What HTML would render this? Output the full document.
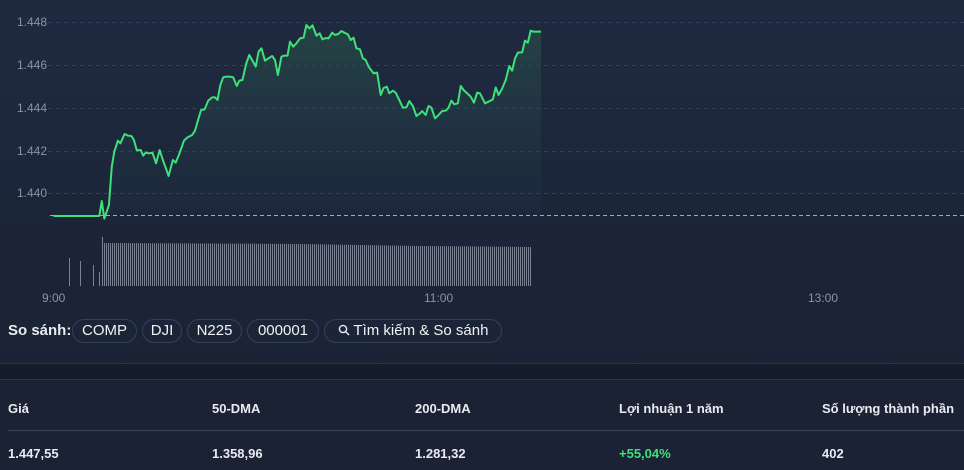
<!DOCTYPE html>
<html><head><meta charset="utf-8"><style>
*{margin:0;padding:0;box-sizing:border-box}
body{width:964px;height:470px;overflow:hidden;background:linear-gradient(#1f2a41 0%,#1b2436 60%,#1a2233 100%);font-family:"Liberation Sans",sans-serif;color:#e8ebf0;position:relative}
.ab{position:absolute}
.yl{position:absolute;left:17px;font-size:12px;color:#8b93a3}
.xl{position:absolute;top:291px;font-size:12px;color:#8b93a3}
.pill{position:absolute;top:319px;height:24px;border:1px solid #364056;border-radius:12px;font-size:15px;line-height:22px;text-align:center;color:#f0f2f5;background:#1c2537}
.h{position:absolute;top:401px;font-size:13px;font-weight:bold;color:#e8ebf0}
.v{position:absolute;top:446px;font-size:13px;font-weight:bold;color:#e8ebf0}
</style></head><body>
<svg class="ab" style="left:0;top:0" width="964" height="310">
<defs><linearGradient id="g" x1="0" y1="0" x2="0" y2="1"><stop offset="0" stop-color="#2a5a4a" stop-opacity=".55"/><stop offset="1" stop-color="#22344a" stop-opacity=".15"/></linearGradient>
<pattern id="vb" x="104" y="0" width="2" height="10" patternUnits="userSpaceOnUse"><rect x="0" y="0" width="1" height="10" fill="#7a8292"/></pattern></defs>
<g stroke="#34405a" stroke-dasharray="4 4" stroke-width="1">
<line x1="48" y1="22.5" x2="964" y2="22.5"/><line x1="48" y1="65.5" x2="964" y2="65.5"/><line x1="48" y1="108.5" x2="964" y2="108.5"/><line x1="48" y1="151.5" x2="964" y2="151.5"/><line x1="48" y1="193.5" x2="964" y2="193.5"/>
</g>
<line x1="50" y1="215.5" x2="964" y2="215.5" stroke="#a4abb8" stroke-dasharray="4 3"/>
<g transform="scale(0.35714,0.33333)">
<polygon fill="url(#g)" points="150,648 278,648 285,603 292,656 305,615 313,500 320,455 330,422 337,430 349,402 358,407 368,408 375,420 383,451 394,450 401,467 408,458 418,460 427,458 437,490 447,450 456,480 463,500 472,528 484,480 492,488 502,462 515,422 525,412 538,405 546,392 556,355 563,330 573,328 583,302 594,292 602,292 609,300 617,255 625,232 633,230 645,230 653,232 663,258 670,242 679,240 689,192 698,165 707,182 716,200 724,155 732,145 742,182 750,176 762,168 770,180 778,225 788,170 795,167 805,167 812,125 821,140 830,130 840,115 850,113 858,75 866,85 875,76 886,107 895,100 903,118 912,114 920,115 930,98 938,105 947,102 956,93 964,98 974,103 982,120 990,113 998,145 1008,148 1016,175 1024,180 1032,200 1046,220 1056,218 1066,285 1074,264 1083,260 1090,280 1100,272 1108,278 1118,300 1128,323 1138,322 1146,303 1156,318 1166,348 1176,340 1182,333 1192,345 1200,318 1208,323 1218,355 1228,345 1238,333 1248,332 1256,323 1264,302 1272,313 1282,310 1290,258 1298,270 1310,282 1318,290 1327,308 1336,278 1344,280 1358,310 1368,305 1380,298 1388,262 1396,285 1406,266 1416,240 1426,198 1434,212 1442,175 1450,158 1462,157 1470,122 1478,128 1486,92 1494,95 1515,95 1515,645 150,645"/>
<polyline fill="none" stroke="#3ee07a" stroke-width="2" vector-effect="non-scaling-stroke" stroke-linejoin="round" points="150,648 278,648 285,603 292,656 305,615 313,500 320,455 330,422 337,430 349,402 358,407 368,408 375,420 383,451 394,450 401,467 408,458 418,460 427,458 437,490 447,450 456,480 463,500 472,528 484,480 492,488 502,462 515,422 525,412 538,405 546,392 556,355 563,330 573,328 583,302 594,292 602,292 609,300 617,255 625,232 633,230 645,230 653,232 663,258 670,242 679,240 689,192 698,165 707,182 716,200 724,155 732,145 742,182 750,176 762,168 770,180 778,225 788,170 795,167 805,167 812,125 821,140 830,130 840,115 850,113 858,75 866,85 875,76 886,107 895,100 903,118 912,114 920,115 930,98 938,105 947,102 956,93 964,98 974,103 982,120 990,113 998,145 1008,148 1016,175 1024,180 1032,200 1046,220 1056,218 1066,285 1074,264 1083,260 1090,280 1100,272 1108,278 1118,300 1128,323 1138,322 1146,303 1156,318 1166,348 1176,340 1182,333 1192,345 1200,318 1208,323 1218,355 1228,345 1238,333 1248,332 1256,323 1264,302 1272,313 1282,310 1290,258 1298,270 1310,282 1318,290 1327,308 1336,278 1344,280 1358,310 1368,305 1380,298 1388,262 1396,285 1406,266 1416,240 1426,198 1434,212 1442,175 1450,158 1462,157 1470,122 1478,128 1486,92 1494,95 1515,95"/>
</g>
<polygon fill="url(#vb)" points="104,243 300,244 420,246 532,247 532,286 104,286"/>
<g stroke="#7a8292" stroke-width="1">
<line x1="69.5" y1="258" x2="69.5" y2="286"/><line x1="80.5" y1="261" x2="80.5" y2="286"/><line x1="93.5" y1="265" x2="93.5" y2="286"/><line x1="99.5" y1="272" x2="99.5" y2="286"/><line x1="102.5" y1="237" x2="102.5" y2="286"/>
</g>
</svg>
<div class="yl" style="top:15px">1.448</div>
<div class="yl" style="top:58px">1.446</div>
<div class="yl" style="top:101px">1.444</div>
<div class="yl" style="top:144px">1.442</div>
<div class="yl" style="top:186px">1.440</div>
<div class="xl" style="left:42px">9:00</div>
<div class="xl" style="left:424px">11:00</div>
<div class="xl" style="left:808px">13:00</div>
<div class="ab" style="left:8px;top:322px;font-size:15px;font-weight:bold">So sánh:</div>
<div class="pill" style="left:72px;width:65px">COMP</div>
<div class="pill" style="left:142px;width:40px">DJI</div>
<div class="pill" style="left:187px;width:55px">N225</div>
<div class="pill" style="left:247px;width:72px">000001</div>
<div class="pill" style="left:324px;width:178px"><svg width="12" height="12" viewBox="0 0 12 12" style="vertical-align:-1px"><circle cx="5" cy="5" r="3.6" fill="none" stroke="#e8ebf0" stroke-width="1.4"/><line x1="7.6" y1="7.6" x2="11" y2="11" stroke="#e8ebf0" stroke-width="1.4"/></svg> Tìm kiếm &amp; So sánh</div>
<div class="ab" style="left:0;top:363px;width:964px;height:17px;background:#151c2a;border-top:1px solid #2c3548;border-bottom:1px solid #2c3548"></div>
<div class="ab" style="left:0;top:381px;width:964px;height:89px;background:#1b2234"></div>
<div class="h" style="left:8px">Giá</div>
<div class="h" style="left:212px">50-DMA</div>
<div class="h" style="left:415px">200-DMA</div>
<div class="h" style="left:619px">Lợi nhuận 1 năm</div>
<div class="h" style="left:822px">Số lượng thành phần</div>
<div class="ab" style="left:8px;top:430px;width:956px;height:1px;background:#3a4356"></div>
<div class="v" style="left:8px">1.447,55</div>
<div class="v" style="left:212px">1.358,96</div>
<div class="v" style="left:415px">1.281,32</div>
<div class="v" style="left:619px;color:#3ee07a">+55,04%</div>
<div class="v" style="left:822px">402</div>
</body></html>
